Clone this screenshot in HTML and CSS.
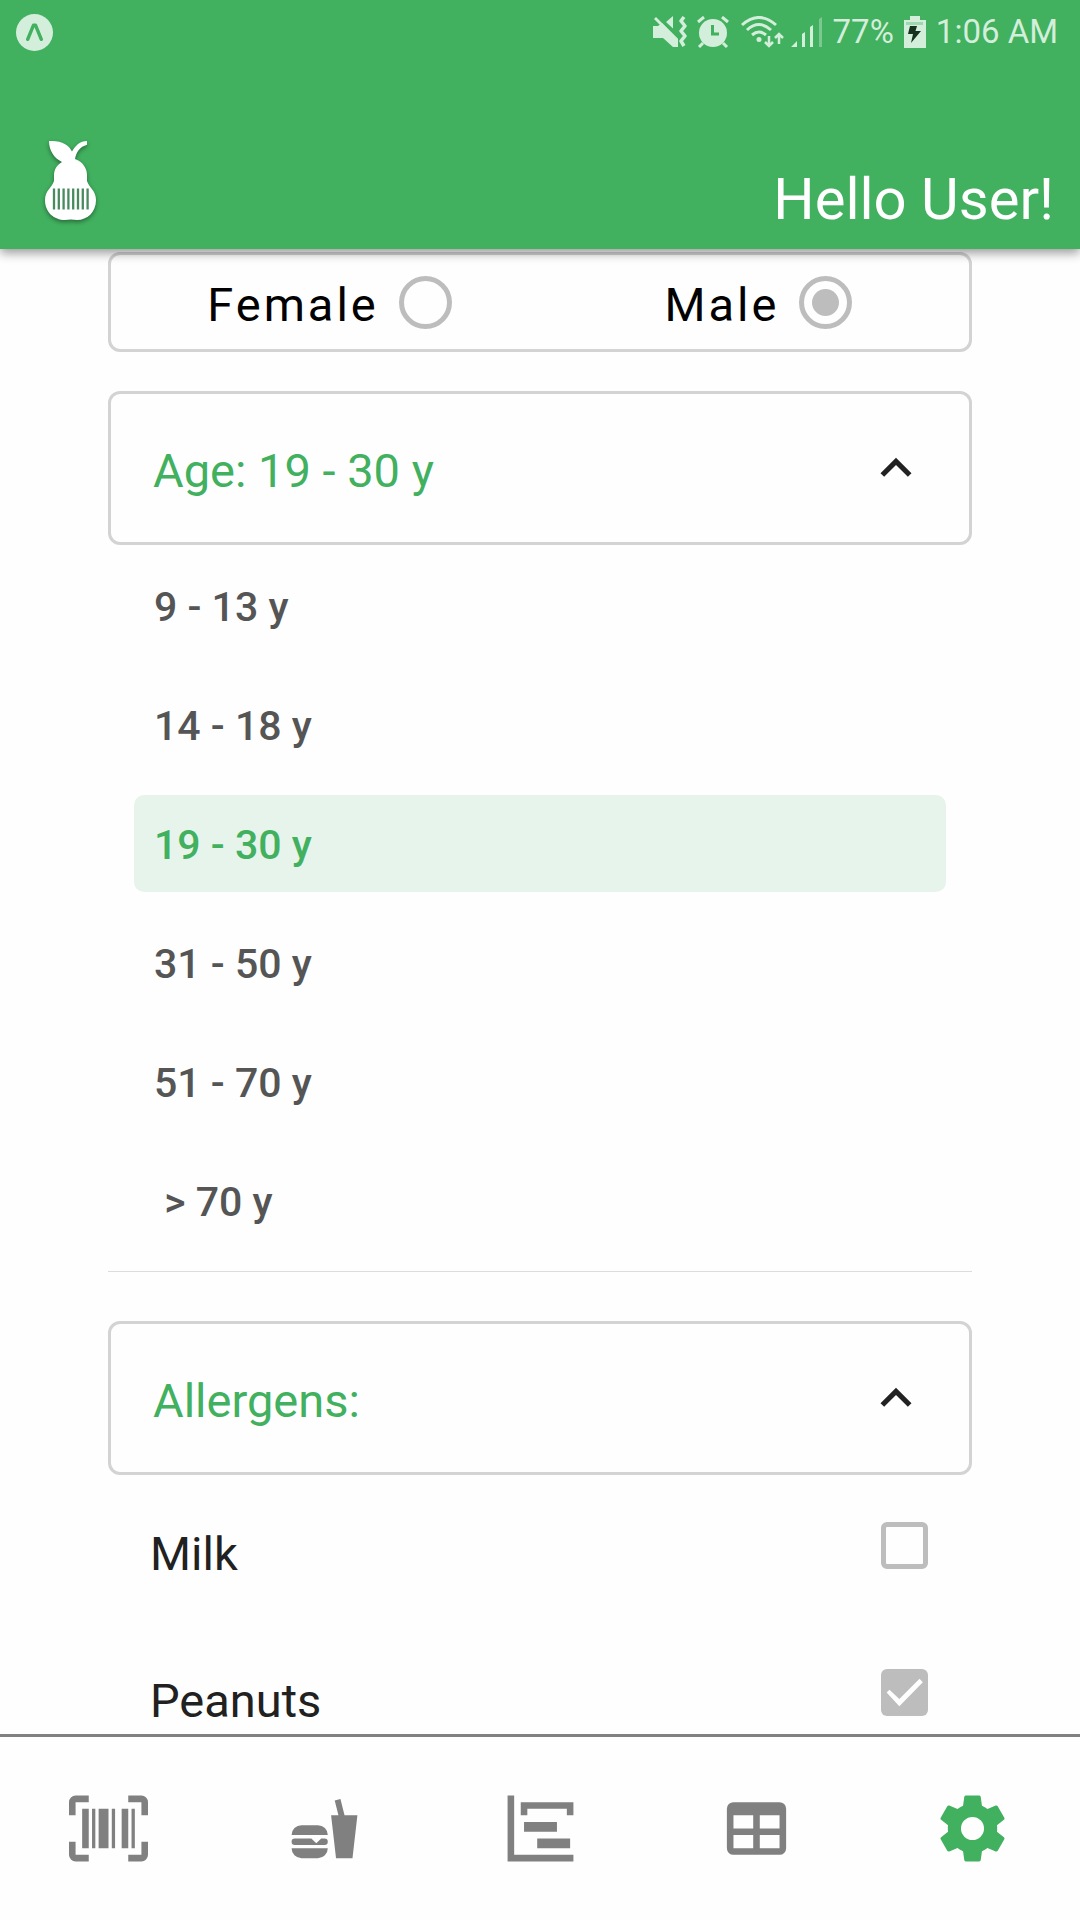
FILE: index.html
```html
<!DOCTYPE html>
<html lang="en">
<head>
	<meta charset="UTF-8">
	<meta name="viewport" content="width=device-width, initial-scale=1">
	<title>Settings</title>
	<link rel="stylesheet" href="styles.css">
</head>
<body>

<header class="header">
	<div class="status">
		<svg class="status-app" viewBox="0 0 38 38" width="37" height="37">
			<circle cx="19" cy="19" r="19" fill="#d3eeda"/>
			<path d="M12 26L18 11.500H20L26 26" fill="none" stroke="#41b05f" stroke-width="3.500" stroke-linecap="round" stroke-linejoin="round"/>
		</svg>
		<!-- muted / vibrate -->
		<svg viewBox="0 0 34 32" width="34" height="32" fill="#d3eeda">
			<path d="M0 10H5L9 7L25 23V31H20L10 22H0ZM13 6L20 0V12.500Z"/>
			<path d="M2 2L24 24" fill="none" stroke="#d3eeda" stroke-width="2.800"/>
			<path d="M31 1l-3 4 4 5-4 5 4 5-4 5 3 5" fill="none" stroke="#d3eeda" stroke-width="3.500" stroke-linejoin="round"/>
		</svg>
		<!-- alarm -->
		<svg viewBox="0 0 32 32" width="32" height="32">
			<circle cx="16" cy="17" r="14" fill="#d3eeda"/>
			<path d="M1 6L7 1M31 6L25 1M6 27L2 31M26 27L30 31" stroke="#d3eeda" stroke-width="3"/>
			<path d="M15.500 9V18H22" fill="none" stroke="#41b05f" stroke-width="3"/>
		</svg>
		<!-- wifi -->
		<svg class="wifi" viewBox="0 0 44 32" width="44" height="32">
			<path d="M1 9Q18 -6 35 9M6 14Q18 3 30 14M11 19Q18 13 25 19" fill="none" stroke="#d3eeda" stroke-width="3"/>
			<circle cx="18" cy="23.500" r="2.500" fill="#d3eeda"/>
			<path d="M28 20V30M24 26L28 30L32 26M38 28V18M34 22L38 18L42 22" fill="none" stroke="#d3eeda" stroke-width="2.500"/>
		</svg>
		<!-- signal -->
		<svg viewBox="0 0 32 32" width="32" height="32" fill="#d3eeda">
			<path d="M0 31L6 25V31ZM11 18L14 16V31H11ZM19 11L22 9V31H19Z"/>
			<path d="M28 3L31 1V31H28Z" opacity=".4"/>
		</svg>
		<span>77%</span>
		<!-- battery -->
		<svg viewBox="0 0 22 32" width="22" height="32">
			<path d="M6 0H16V4H22V32H0V4H6Z" fill="#d3eeda"/>
			<path d="M2 6H19V9H2Z" fill="#9fd7ae"/>
			<path d="M6 10H13L11.500 15H17L7 27L9 18H4Z" fill="#16321f"/>
		</svg>
		<span>1:06 AM</span>
	</div>
	<div class="title-bar">
		<svg class="logo" viewBox="0 0 52 84" width="52" height="80" preserveAspectRatio="none">
			<path d="M4 0C16 -1 24 4 27 11C30 5 35 0 42 0V4C35 6 31 12 30 19C38 22 42 29 42 36V42C44 49 51 52 51 62C51 75 42 83 32 83Q25.500 82 20 83C9 83 0 75 0 62C0 52 7 49 9 42V36C9 30 12 25 17 22C9 18 4 10 4 0Z" fill="#fff"/>
			<path d="M9 50V72M13.800 50V72M18.600 50V72M23.400 50V72M28.200 50V72M33 50V72M37.800 50V72M42.600 50V72" stroke="#4a8a60" stroke-width="2.300"/>
		</svg>
		<span class="greeting">Hello User!</span>
	</div>
</header>

<main class="content">
	<div class="gender">
		<label class="gender-option"><span>Female</span><input class="radio" type="radio" name="gender"></label>
		<label class="gender-option"><span>Male</span><input class="radio" type="radio" name="gender" checked></label>
	</div>

	<button class="panel" type="button" aria-expanded="true">
		<span class="panel-title">Age: 19 - 30 y</span>
		<svg viewBox="0 0 24 24" width="62" height="62" fill="#222"><path d="M7.410,15.410L12,10.830L16.590,15.410L18,14L12,8L6,14Z"/></svg>
	</button>
	<div class="ages">
		<button class="age" type="button">9 - 13 y</button>
		<button class="age" type="button">14 - 18 y</button>
		<button class="age selected" type="button">19 - 30 y</button>
		<button class="age" type="button">31 - 50 y</button>
		<button class="age" type="button">51 - 70 y</button>
		<button class="age" type="button">&nbsp;&gt; 70 y</button>
	</div>

	<button class="panel" type="button" aria-expanded="true">
		<span class="panel-title">Allergens:</span>
		<svg viewBox="0 0 24 24" width="62" height="62" fill="#222"><path d="M7.410,15.410L12,10.830L16.590,15.410L18,14L12,8L6,14Z"/></svg>
	</button>
	<div class="allergens">
		<label class="allergen"><span>Milk</span><input class="check" type="checkbox"></label>
		<label class="allergen"><span>Peanuts</span><input class="check" type="checkbox" checked></label>
	</div>
</main>

<nav class="tabs">
	<a class="tab" href="#scan" aria-label="Scan">
		<svg viewBox="0 0 24 24" width="79" height="79"><path d="M4,6H6V18H4V6M7,6H8V18H7V6M9,6H12V18H9V6M13,6H14V18H13V6M16,6H18V18H16V6M19,6H20V18H19V6M2,4V8H0V4A2,2 0 0,1 2,2H6V4H2M22,2A2,2 0 0,1 24,4V8H22V4H18V2H22M2,16V20H6V22H2A2,2 0 0,1 0,20V16H2M22,20V16H24V20A2,2 0 0,1 22,22H18V20H22Z"/></svg>
	</a>
	<a class="tab" href="#food" aria-label="Food">
		<svg viewBox="0 0 24 24" width="79" height="79"><path d="M15.500,21L14,8H16.230L15.100,3.460L16.840,3L18.090,8H22L20.500,21H15.500M5,11H10A3,3 0 0,1 13,14H2A3,3 0 0,1 5,11M13,18A3,3 0 0,1 10,21H5A3,3 0 0,1 2,18H13M3,15H8L9.500,16.500L11,15H12A1,1 0 0,1 13,16A1,1 0 0,1 12,17H3A1,1 0 0,1 2,16A1,1 0 0,1 3,15Z"/></svg>
	</a>
	<a class="tab" href="#chart" aria-label="Chart">
		<svg viewBox="0 0 24 24" width="79" height="79"><path d="M2,2H4V20H22V22H2ZM7,10H17V13H7ZM11,15H21V18H11ZM6,4H22V8H20V6H8V8H6Z"/></svg>
	</a>
	<a class="tab" href="#table" aria-label="Table">
		<svg viewBox="0 0 24 24" width="79" height="79"><path d="M5,4H19A2,2 0 0,1 21,6V18A2,2 0 0,1 19,20H5A2,2 0 0,1 3,18V6A2,2 0 0,1 5,4M5,8V12H11V8H5M13,8V12H19V8H13M5,14V18H11V14H5M13,14V18H19V14H13Z"/></svg>
	</a>
	<a class="tab active" href="#settings" aria-label="Settings">
		<svg viewBox="0 0 24 24" width="79" height="79"><path d="M12,15.500A3.500,3.500 0 0,1 8.500,12A3.500,3.500 0 0,1 12,8.500A3.500,3.500 0 0,1 15.500,12A3.500,3.500 0 0,1 12,15.500M19.430,12.970C19.470,12.650 19.500,12.330 19.500,12C19.500,11.670 19.470,11.340 19.430,11L21.540,9.370C21.730,9.220 21.780,8.950 21.660,8.730L19.660,5.270C19.540,5.050 19.270,4.960 19.050,5.050L16.560,6.050C16.040,5.660 15.500,5.320 14.870,5.070L14.500,2.420C14.460,2.180 14.250,2 14,2H10C9.750,2 9.540,2.180 9.500,2.420L9.130,5.070C8.500,5.320 7.960,5.660 7.440,6.050L4.950,5.050C4.730,4.960 4.460,5.050 4.340,5.270L2.340,8.730C2.210,8.950 2.270,9.220 2.460,9.370L4.570,11C4.530,11.340 4.500,11.670 4.500,12C4.500,12.330 4.530,12.650 4.570,12.970L2.460,14.630C2.270,14.780 2.210,15.050 2.340,15.270L4.340,18.730C4.460,18.950 4.730,19.030 4.950,18.950L7.440,17.940C7.960,18.340 8.500,18.680 9.130,18.930L9.500,21.580C9.540,21.820 9.750,22 10,22H14C14.250,22 14.460,21.820 14.500,21.580L14.870,18.930C15.500,18.670 16.040,18.340 16.560,17.940L19.050,18.950C19.270,19.030 19.540,18.950 19.660,18.730L21.660,15.270C21.780,15.050 21.730,14.780 21.540,14.630L19.430,12.970Z"/></svg>
	</a>
</nav>

</body>
</html>
```

FILE: styles.css
```css
* {
	box-sizing: border-box;
}
body {
	margin: 0;
	min-height: 100vh;
	display: flex;
	flex-direction: column;
	background-color: #fefefe;
	font-family: Roboto, "Noto Sans", sans-serif;
	font-size: 47px;
	line-height: 56px;
	color: #000;
}
button {
	font: inherit;
	background: none;
	border: none;
	text-align: left;
	cursor: pointer;
}
svg {
	display: block;
	flex: none;
}

/* header */
.header {
	position: relative;
	background-color: #41b05f;
	box-shadow: 0 4px 10px rgba(0, 0, 0, 0.4);
}
.status {
	display: flex;
	align-items: center;
	gap: 10px;
	height: 64px;
	padding: 0 22px 0 16px;
	font-size: 33px;
	color: #d3eeda;
}
.status-app {
	margin-right: auto;
}
.wifi {
	margin: 0 -4px 0 2px;
}
.title-bar {
	display: flex;
	align-items: flex-end;
	justify-content: space-between;
	height: 185px;
	padding: 0 26px 18px 45px;
}
.logo {
	overflow: visible;
	margin-bottom: 10px;
	filter: drop-shadow(0 2px 2px rgba(0, 0, 0, 0.4));
}
.greeting {
	font-size: 58px;
	line-height: 64px;
	color: #fff;
}

/* settings form */
.content {
	flex: 1;
	padding: 3px 10% 0;
}
.gender {
	display: flex;
	height: 100px;
	margin-bottom: 39px;
	border: 3px solid #d3d3d3;
	border-radius: 12px;
}
.gender-option {
	flex: 1;
	display: flex;
	align-items: center;
	justify-content: center;
	gap: 20px;
	padding-left: 8px;
	letter-spacing: 3px;
}
.gender-option span,
.panel-title {
	padding-top: 6px;
}
.radio,
.check {
	appearance: none;
	flex: none;
	display: grid;
	place-items: center;
	margin: 0;
	border: 5px solid #bdbdbd;
}
.radio {
	width: 53px;
	height: 53px;
	border-radius: 50%;
}
.radio:checked::before {
	content: "";
	width: 27px;
	height: 27px;
	border-radius: 50%;
	background-color: #bdbdbd;
}
.panel {
	display: flex;
	align-items: center;
	justify-content: space-between;
	width: 100%;
	height: 154px;
	padding: 0 42px;
	border: 3px solid #d3d3d3;
	border-radius: 12px;
	color: #41b05f;
}
.ages {
	display: flex;
	flex-direction: column;
	gap: 22px;
	padding: 12px 26px 22px;
	margin-bottom: 49px;
	border-bottom: 1px solid #dcdcdc;
}
.age {
	padding: 26px 20px 22px;
	border-radius: 10px;
	font-size: 41px;
	font-weight: 500;
	line-height: 49px;
	color: #555;
}
.age.selected {
	background-color: #e7f4eb;
	color: #41b05f;
}
.allergens {
	display: flex;
	flex-direction: column;
	gap: 87px;
	padding: 47px 44px 5px 42px;
	color: #212121;
}
.allergen {
	display: flex;
	justify-content: space-between;
}
.allergen span {
	padding-top: 4px;
}
.check {
	width: 47px;
	height: 47px;
	border-radius: 6px;
}
.check:checked {
	border: none;
	background-color: #bdbdbd;
}
.check:checked::before {
	content: "";
	width: 47px;
	height: 47px;
	background-color: #fff;
	clip-path: polygon(12% 50%, 18% 44%, 39% 64%, 82% 21%, 89% 28%, 39% 79%);
}

/* bottom tabs */
.tabs {
	display: flex;
	border-top: 3px solid #808080;
}
.tab {
	flex: 1;
	display: flex;
	justify-content: center;
	padding: 52px 0;
	fill: #808080;
}
.tab.active {
	fill: #41b05f;
}
```
